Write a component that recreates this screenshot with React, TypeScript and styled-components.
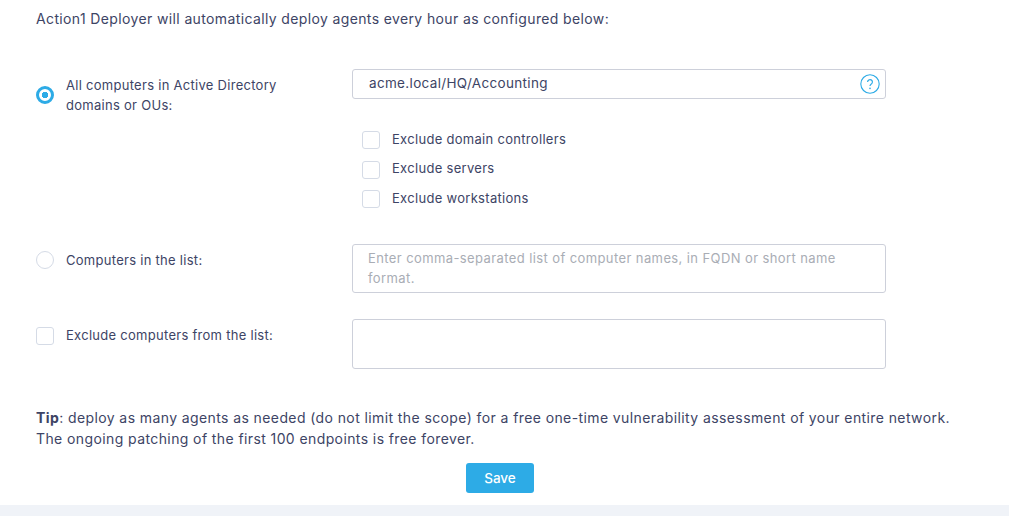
import styled, { createGlobalStyle } from "styled-components";

const GlobalStyle = createGlobalStyle`
  html, body {
    margin: 0;
    padding: 0;
    background: #fff;
  }
  * {
    box-sizing: border-box;
  }
`;

const App = () => {
  return (
    <Page>
      <GlobalStyle />
      <Content>
        <Intro>Action1 Deployer will automatically deploy agents every hour as configured below:</Intro>

        <FormRow top={39}>
          <LabelCell>
            <Radio checked />
            <Label>
              All computers in Active Directory
              <br />
              domains or OUs:
            </Label>
          </LabelCell>
          <div>
            <InputBox>
              acme.local/HQ/Accounting
              <HelpIcon viewBox="0 0 20 20">
                <circle cx="10" cy="10" r="9.2" fill="none" stroke="#2dabe6" strokeWidth="1.1" />
                <path
                  d="M7.6 8a2.4 2.4 0 1 1 3.7 2c-.9.6-1.3 1-1.3 2"
                  fill="none"
                  stroke="#2dabe6"
                  strokeWidth="1.2"
                />
                <circle cx="10" cy="14.4" r=".8" fill="#2dabe6" />
              </HelpIcon>
            </InputBox>
            <Checks>
              <CheckRow>
                <Checkbox />
                <CheckText>Exclude domain controllers</CheckText>
              </CheckRow>
              <CheckRow>
                <Checkbox />
                <CheckText>Exclude servers</CheckText>
              </CheckRow>
              <CheckRow>
                <Checkbox />
                <CheckText>Exclude workstations</CheckText>
              </CheckRow>
            </Checks>
          </div>
        </FormRow>

        <FormRow top={36}>
          <LabelCell>
            <Radio />
            <Label>Computers in the list:</Label>
          </LabelCell>
          <AreaBox h={49}>
            <Placeholder>
              Enter comma-separated list of computer names, in FQDN or short name
              <br />
              format.
            </Placeholder>
          </AreaBox>
        </FormRow>

        <FormRow top={26}>
          <LabelCell>
            <RowCheckbox />
            <Label>Exclude computers from the list:</Label>
          </LabelCell>
          <AreaBox h={50} />
        </FormRow>

        <Tip>
          <b>Tip</b>: deploy as many agents as needed (do not limit the scope) for a free one-time vulnerability
          assessment of your entire network.
          <br />
          The ongoing patching of the first 100 endpoints is free forever.
        </Tip>

        <SaveRow>
          <SaveButton>Save</SaveButton>
        </SaveRow>
      </Content>
      <Footer />
    </Page>
  );
};

export default App;

const Page = styled.div`
  width: 100%;
  height: 516px;
  display: flex;
  flex-direction: column;
  overflow: hidden;
  font-family: Inter, "Liberation Sans", sans-serif;
  color: #3d4465;
`;

const Content = styled.div`
  height: 505px;
  padding: 8px 0 0 36px;
`;

const Intro = styled.div`
  font-size: 14px;
  line-height: 22px;
  letter-spacing: 0.37px;
`;

const FormRow = styled.div<{ top: number }>`
  display: grid;
  grid-template-columns: 316px 534px;
  margin-top: ${({ top }) => top}px;
`;

const LabelCell = styled.div`
  display: flex;
  align-items: flex-start;
  gap: 12px;
  padding-top: 6px;
`;

const Label = styled.div`
  font-size: 13px;
  line-height: 20px;
  letter-spacing: 0.28px;
`;

const Radio = styled.span<{ checked?: boolean }>`
  flex: none;
  width: 18px;
  height: 18px;
  border-radius: 50%;
  border: ${({ checked }) => (checked ? "3px solid #2dabe6" : "1px solid #d5dbe6")};
  background: ${({ checked }) =>
    checked ? "radial-gradient(circle, #2dabe6 0 3px, #fff 3.5px)" : "#fff"};
  margin-top: ${({ checked }) => (checked ? "11px" : "1px")};
`;

const Checkbox = styled.span`
  flex: none;
  width: 18px;
  height: 18px;
  border: 1px solid #d5dbe6;
  border-radius: 3px;
  background: #fff;
`;

const RowCheckbox = styled(Checkbox)`
  margin-top: 2px;
`;

const InputBox = styled.div`
  height: 30px;
  display: flex;
  align-items: center;
  justify-content: space-between;
  padding: 0 5px 2px 16px;
  border: 1px solid #cdd0da;
  border-radius: 3px;
  font-size: 13.5px;
  letter-spacing: 0.33px;
`;

const HelpIcon = styled.svg`
  width: 20px;
  height: 20px;
  margin-bottom: -2px;
`;

const Checks = styled.div`
  display: flex;
  flex-direction: column;
  gap: 11.5px;
  margin-top: 32px;
  padding-left: 10px;
`;

const CheckRow = styled.div`
  display: flex;
  align-items: center;
  gap: 12px;
  height: 18px;
`;

const CheckText = styled.span`
  font-size: 13px;
  letter-spacing: 0.3px;
  margin-bottom: 3px;
`;

const AreaBox = styled.div<{ h: number }>`
  height: ${({ h }) => h}px;
  padding: 3px 15px;
  border: 1px solid #cdd0da;
  border-radius: 3px;
`;

const Placeholder = styled.div`
  font-size: 13px;
  line-height: 20px;
  letter-spacing: 0.4px;
  color: #a9adb5;
`;

const Tip = styled.div`
  margin-top: 38px;
  font-size: 14px;
  line-height: 21px;
  letter-spacing: 0.4px;

  b {
    font-weight: 700;
  }
`;

const SaveRow = styled.div`
  display: flex;
  justify-content: center;
  width: 928px;
  margin-top: 14px;
`;

const SaveButton = styled.button`
  width: 68px;
  height: 30px;
  border: none;
  border-radius: 3px;
  background: #2dabe6;
  color: #fff;
  font-family: inherit;
  font-size: 13.5px;
  font-weight: 500;
`;

const Footer = styled.div`
  flex: 1;
  background: #f0f3f8;
`;
